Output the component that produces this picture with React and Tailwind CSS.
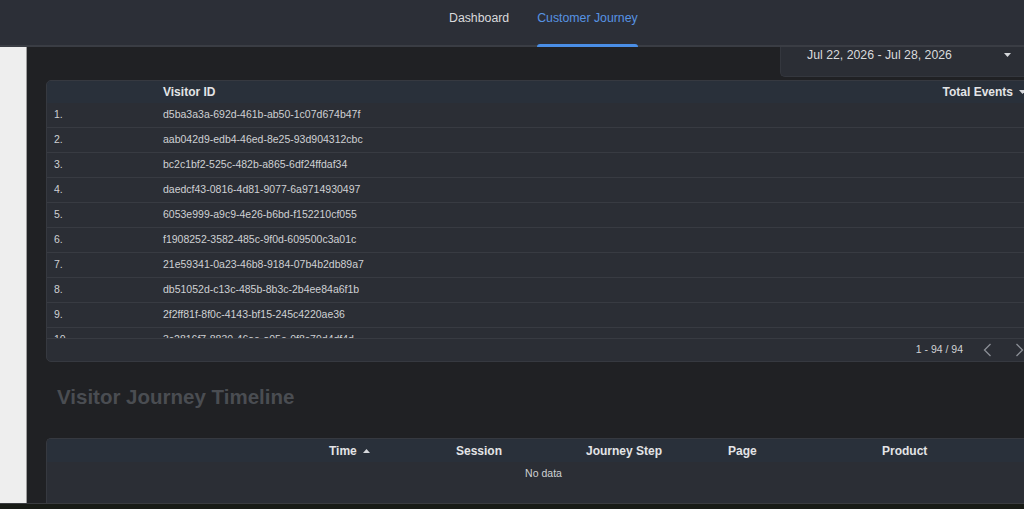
import React from "react";

const ids = [
  "d5ba3a3a-692d-461b-ab50-1c07d674b47f",
  "aab042d9-edb4-46ed-8e25-93d904312cbc",
  "bc2c1bf2-525c-482b-a865-6df24ffdaf34",
  "daedcf43-0816-4d81-9077-6a9714930497",
  "6053e999-a9c9-4e26-b6bd-f152210cf055",
  "f1908252-3582-485c-9f0d-609500c3a01c",
  "21e59341-0a23-46b8-9184-07b4b2db89a7",
  "db51052d-c13c-485b-8b3c-2b4ee84a6f1b",
  "2f2ff81f-8f0c-4143-bf15-245c4220ae36",
  "3c2816f7-8830-46ae-a05e-0f8c79d4df4d",
];

function Caret({ up = false }) {
  return (
    <svg width="7" height="4" viewBox="0 0 7 4" className="inline-block">
      {up ? <path d="M0 4 L3.5 0 L7 4 Z" fill="#d6d8dc" /> : <path d="M0 0 L7 0 L3.5 4 Z" fill="#d6d8dc" />}
    </svg>
  );
}

export default function App() {
  return (
    <div
      className="w-[1024px] h-[509px] overflow-hidden flex flex-col bg-[#202124]"
      style={{ fontFamily: '"Liberation Sans", Arial, sans-serif' }}
    >
      {/* Top nav */}
      <div className="h-[47px] shrink-0 bg-[#2c2f37] border-b-2 border-[#3a3d44] flex pl-[449px] gap-[28px]">
        <div className="flex flex-col">
          <div className="pt-[11px] text-[12.3px] leading-[14px] text-[#d9dadc]">Dashboard</div>
        </div>
        <div className="flex flex-col justify-between">
          <div className="pt-[11px] text-[12.3px] leading-[14px] text-[#5793e3]">Customer Journey</div>
          <div className="h-[3px] -mb-[2px] bg-[#4a8ee6] rounded-t-sm" />
        </div>
      </div>

      {/* Body */}
      <div className="flex h-[456px] shrink-0">
        <div className="w-[27px] shrink-0 bg-[#eeeeee] border-r border-[#9c9c9c]" />
        <div className="w-[1013px] shrink-0 flex flex-col">
          {/* Date picker */}
          <div className="h-[30px] flex justify-end">
            <div className="w-[260px] bg-[#2b2e35] rounded-bl-[5px] border-l border-b border-[#34373e] pl-[26px] pr-[29px] pt-[1px]">
              <div className="h-[14px] flex items-center justify-between">
                <span className="text-[12.3px] leading-[14px] text-[#d9dadc]">Jul 22, 2026 - Jul 28, 2026</span>
                <Caret />
              </div>
            </div>
          </div>

          {/* Visitor table */}
          <div className="mt-[3px] ml-[19px] h-[282px] flex flex-col bg-[#2b2e35] border border-[#363940] rounded-l-[5px] overflow-hidden">
            <div className="h-[22px] shrink-0 bg-[#29303a] flex items-center">
              <div className="w-[116px] shrink-0" />
              <div className="flex-1 text-[12px] font-bold text-[#e3e4e6]">Visitor ID</div>
              <div className="flex items-center gap-[6px] pr-[13px] text-[12px] font-bold text-[#e3e4e6]">
                Total Events <Caret />
              </div>
            </div>
            <div className="h-[235px] shrink-0 overflow-hidden">
              {ids.map((id, i) => (
                <div key={id} className="h-[25px] flex items-center border-b border-[#383b42]">
                  <div className="w-[116px] shrink-0 pl-[7px] text-[10.5px] text-[#cfd1d4]">{i + 1}.</div>
                  <div className="text-[10.5px] text-[#cfd1d4]">{id}</div>
                </div>
              ))}
            </div>
            <div className="flex-1 flex items-center justify-end pr-[15px] border-t border-[#383b42]">
              <span className="text-[10.5px] text-[#cfd1d4]">1 - 94 / 94</span>
              <svg width="9" height="14" viewBox="0 0 9 14" className="ml-[20px]">
                <polyline points="7.5,1 1.5,7 7.5,13" fill="none" stroke="#8b8f96" strokeWidth="1.3" />
              </svg>
              <svg width="9" height="14" viewBox="0 0 9 14" className="ml-[23px]">
                <polyline points="1.5,1 7.5,7 1.5,13" fill="none" stroke="#8b8f96" strokeWidth="1.3" />
              </svg>
            </div>
          </div>

          {/* Heading */}
          <div className="mt-[23px] h-[24px] pl-[30px] text-[20.5px] leading-[24px] font-bold text-[#4a4d52]">
            Visitor Journey Timeline
          </div>

          {/* Timeline table */}
          <div className="mt-[29px] ml-[19px] flex-1 flex flex-col bg-[#2b2e35] border-l border-t border-[#363940] rounded-tl-[5px] overflow-hidden">
            <div className="h-[23px] shrink-0 bg-[#29303a] flex items-center text-[12px] font-bold text-[#e3e4e6]">
              <div className="w-[282px] shrink-0" />
              <div className="w-[127px] shrink-0 flex items-center gap-[6px]">Time <Caret up /></div>
              <div className="w-[130px] shrink-0">Session</div>
              <div className="w-[142px] shrink-0">Journey Step</div>
              <div className="w-[154px] shrink-0">Page</div>
              <div>Product</div>
            </div>
            <div className="pt-[4px] text-center text-[10.5px] text-[#cfd1d4]">No data</div>
          </div>
        </div>
      </div>

      {/* Bottom strip */}
      <div className="flex-1 bg-[#181b16] border-t border-[#3a3c40]" />
    </div>
  );
}
